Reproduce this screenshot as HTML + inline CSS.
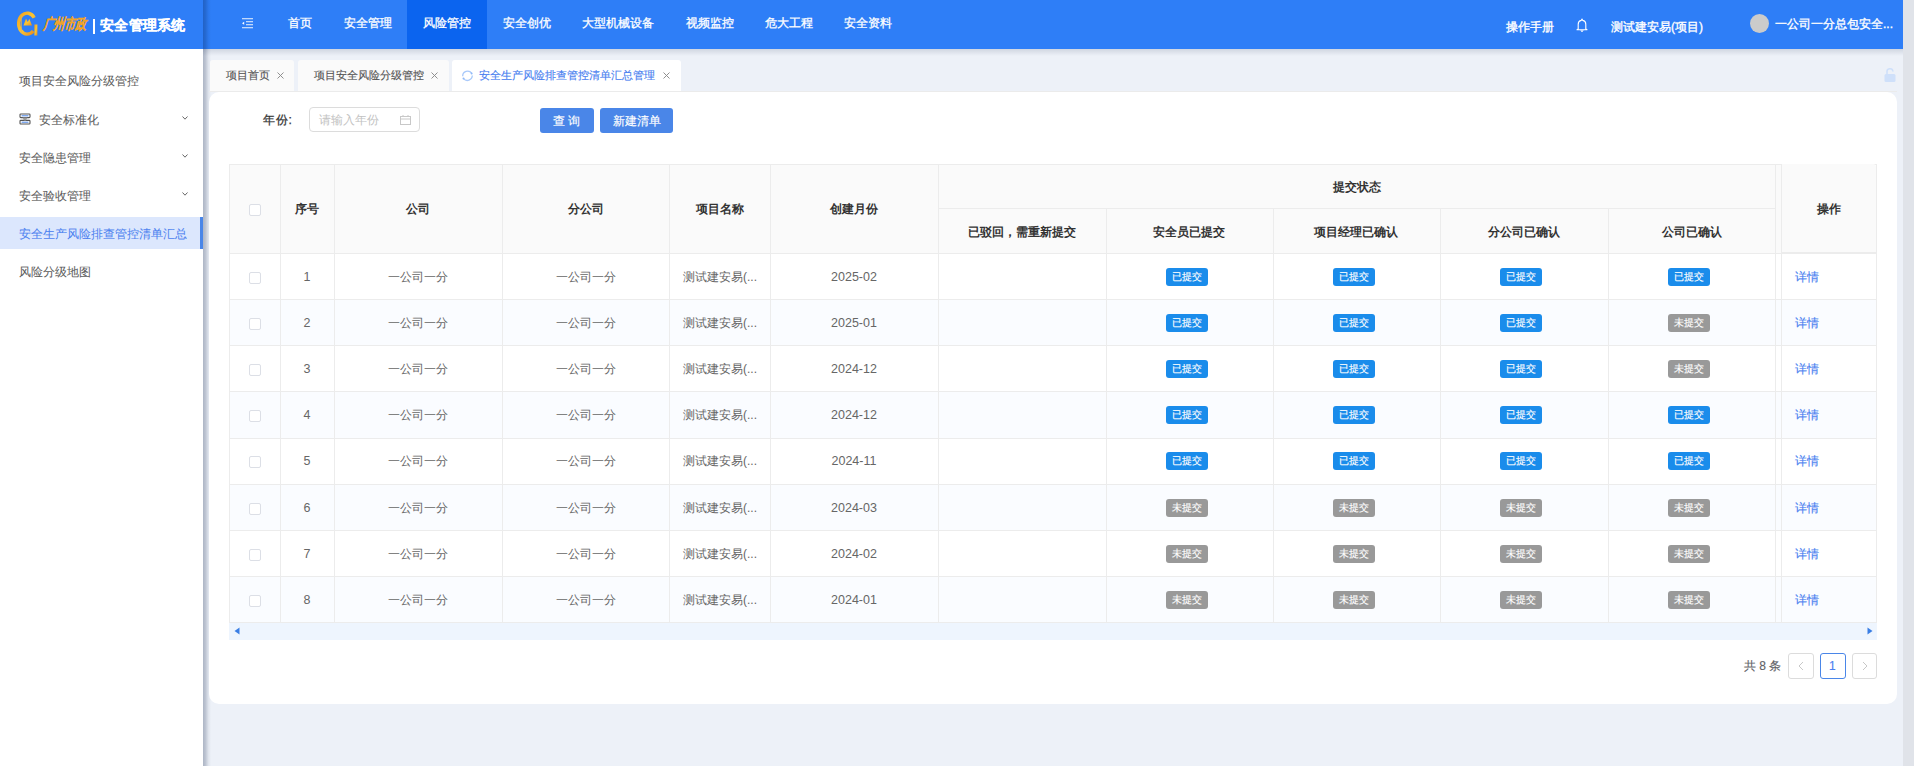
<!DOCTYPE html><html><head><meta charset="utf-8"><style>
*{box-sizing:border-box;margin:0;padding:0}
html,body{width:1914px;height:766px;overflow:hidden}
body{font-family:"Liberation Sans",sans-serif;font-size:12px;background:#edf1f8;position:relative;color:#666}
.abs{position:absolute}
.t{position:absolute;white-space:nowrap;line-height:1;-webkit-text-stroke:0.15px currentColor}
#hdr{left:0;top:0;width:1903px;height:49px;background:#2e7ef7}
#vscroll{left:1903px;top:0;width:11px;height:766px;background:#e0e3e9}
#side{left:0;top:49px;width:203px;height:717px;background:#fff}
#sideshadow{left:203px;top:0;width:8px;height:766px;background:linear-gradient(to right,rgba(0,21,60,.27) 0,rgba(0,21,60,.2) 2.5px,rgba(0,21,60,.06) 5.5px,rgba(0,21,60,0) 8px)}
#hdrshadow{left:203px;top:49px;width:1700px;height:7px;background:linear-gradient(to bottom,rgba(0,21,60,.12),rgba(0,21,60,0))}
.nav{position:absolute;top:0;height:49px;color:#fff;font-size:12px;white-space:nowrap}
.nav .t{-webkit-text-stroke:0.3px #fff}
.nav.act{background:#0b64ef}
.sact{position:absolute;left:0;top:217px;width:203px;height:32px;background:#dce7fd}
.sbar{position:absolute;left:200px;top:217px;width:3px;height:32px;background:#4a86e8}
.chev{position:absolute;width:6px;height:4px}
.tab{position:absolute;top:60px;height:31px;background:#fafafa;border-radius:3px 3px 0 0}
#card{left:209px;top:92px;width:1688px;height:612px;background:#fff;border-radius:10px}
.bx{position:absolute}
.cb{position:absolute;width:12px;height:12px;border:1px solid #dcdfe6;border-radius:2px;background:#fff}
.badge{position:absolute;width:42px;height:18px;border-radius:3px}
.b1{background:#1a8ceb}
.b0{background:#999}
</style></head><body>
<div id="hdr" class="abs"></div>
<svg class="abs" style="left:0;top:0" width="45" height="45" viewBox="0 0 45 45">
<defs><linearGradient id="gold" x1="0" y1="0" x2="1" y2="1"><stop offset="0" stop-color="#f2a21e"/><stop offset="0.5" stop-color="#f9c535"/><stop offset="1" stop-color="#e98d1c"/></linearGradient></defs>
<path d="M34.2 17.8 A8.5 10.5 0 1 0 33.2 31" fill="none" stroke="url(#gold)" stroke-width="3.4"/>
<rect x="34.4" y="24.5" width="3" height="11" fill="url(#gold)"/>
<line x1="21.3" y1="15.5" x2="21.3" y2="32.5" stroke="#d9b060" stroke-width="0.9"/>
<path d="M23.5 25.5 L26 18.5 L27.8 22 L29.3 18.8 L32 25.5 Z" fill="url(#gold)"/>
</svg>
<div class="t" style="left:44px;top:17px;font-size:11px;color:#f2a428;font-style:italic;letter-spacing:-0.4px;-webkit-text-stroke:0.7px #f2a428;transform:scaleY(1.35) skewX(-8deg);transform-origin:0 0">广州市政</div>
<div class="abs" style="left:92.5px;top:19px;width:2px;height:14.5px;background:#fff"></div>
<div class="t" style="left:100px;top:18px;font-size:14px;color:#fff;font-weight:bold;letter-spacing:0.3px;-webkit-text-stroke:0.2px #fff">安全管理系统</div>
<div class="nav" style="left:272px;width:56px"><div class="t" style="left:16px;top:17px">首页</div></div>
<div class="nav" style="left:328px;width:79px"><div class="t" style="left:16px;top:17px">安全管理</div></div>
<div class="nav act" style="left:407px;width:80px"><div class="t" style="left:16px;top:17px">风险管控</div></div>
<div class="nav" style="left:487px;width:79px"><div class="t" style="left:16px;top:17px">安全创优</div></div>
<div class="nav" style="left:566px;width:104px"><div class="t" style="left:16px;top:17px">大型机械设备</div></div>
<div class="nav" style="left:670px;width:79px"><div class="t" style="left:16px;top:17px">视频监控</div></div>
<div class="nav" style="left:749px;width:79px"><div class="t" style="left:16px;top:17px">危大工程</div></div>
<div class="nav" style="left:828px;width:79px"><div class="t" style="left:16px;top:17px">安全资料</div></div>
<svg class="abs" style="left:241px;top:17px" width="13" height="12" viewBox="0 0 13 12">
<rect x="1" y="1" width="11" height="1.3" fill="#c0d8fc"/><rect x="5" y="4" width="7" height="1.3" fill="#c0d8fc"/><rect x="5" y="7" width="7" height="1.3" fill="#c0d8fc"/><rect x="1" y="10" width="11" height="1.3" fill="#c0d8fc"/>
<path d="M1 6.3 L3.2 4.8 L3.2 7.8 Z" fill="#fff"/></svg>
<div class="t" style="left:1506px;top:20.5px;color:#fff;-webkit-text-stroke:0.35px #fff">操作手册</div>
<svg class="abs" style="left:1576px;top:18px" width="12" height="15" viewBox="0 0 12 15">
<path d="M6 1 L6.8 2.4 C8.8 2.8 9.8 4.2 9.8 6.2 L9.8 11 L11 11.8 L1 11.8 L2.2 11 L2.2 6.2 C2.2 4.2 3.2 2.8 5.2 2.4 Z" fill="none" stroke="#fff" stroke-width="1.1" stroke-linejoin="round"/>
<path d="M4.8 12.6 A1.3 1.3 0 0 0 7.2 12.6" fill="#fff" stroke="#fff" stroke-width="1"/></svg>
<div class="t" style="left:1611px;top:20.5px;color:#fff;-webkit-text-stroke:0.35px #fff">测试建安易(项目)</div>
<div class="abs" style="left:1749.5px;top:14px;width:19px;height:19px;border-radius:50%;background:#cbcbcb"></div>
<div class="t" style="left:1775px;top:17.5px;color:#fff;-webkit-text-stroke:0.35px #fff">一公司一分总包安全...</div>
<div id="vscroll" class="abs"></div>
<div id="side" class="abs"></div>
<div class="sact"></div><div class="sbar"></div>
<div class="t" style="left:19px;top:75px;color:#5c5c5c;-webkit-text-stroke:0.05px #5c5c5c">项目安全风险分级管控</div>
<div class="t" style="left:39px;top:114px;color:#5c5c5c;-webkit-text-stroke:0.05px #5c5c5c">安全标准化</div>
<svg class="chev" style="left:182px;top:116px" width="6" height="4" viewBox="0 0 6 4"><path d="M0.5 0.5 L3 3.2 L5.5 0.5" fill="none" stroke="#666" stroke-width="1"/></svg>
<div class="t" style="left:19px;top:152px;color:#5c5c5c;-webkit-text-stroke:0.05px #5c5c5c">安全隐患管理</div>
<svg class="chev" style="left:182px;top:154px" width="6" height="4" viewBox="0 0 6 4"><path d="M0.5 0.5 L3 3.2 L5.5 0.5" fill="none" stroke="#666" stroke-width="1"/></svg>
<div class="t" style="left:19px;top:190px;color:#5c5c5c;-webkit-text-stroke:0.05px #5c5c5c">安全验收管理</div>
<svg class="chev" style="left:182px;top:192px" width="6" height="4" viewBox="0 0 6 4"><path d="M0.5 0.5 L3 3.2 L5.5 0.5" fill="none" stroke="#666" stroke-width="1"/></svg>
<div class="t" style="left:19px;top:228px;color:#4d82f0;-webkit-text-stroke:0.05px #4d82f0">安全生产风险排查管控清单汇总</div>
<div class="t" style="left:19px;top:266px;color:#5c5c5c;-webkit-text-stroke:0.05px #5c5c5c">风险分级地图</div>
<svg class="abs" style="left:19px;top:113px" width="12" height="12" viewBox="0 0 12 12">
<rect x="1" y="1" width="10" height="3.6" rx="0.8" fill="none" stroke="#555" stroke-width="1.1"/>
<rect x="1" y="7.4" width="10" height="3.6" rx="0.8" fill="none" stroke="#555" stroke-width="1.1"/>
<path d="M3.5 4.6 L5 7.4 L7 7.4 L8.5 4.6" fill="#999"/>
<rect x="2.6" y="2.3" width="6.8" height="1" fill="#4a86e8"/><rect x="2.6" y="8.7" width="6.8" height="1" fill="#4a86e8"/></svg>
<div id="sideshadow" class="abs"></div>
<div id="hdrshadow" class="abs"></div>
<div class="tab" style="left:210px;width:84px"></div>
<div class="t" style="left:226px;top:70px;font-size:11px;color:#555">项目首页</div>
<svg class="abs" style="left:277px;top:72px" width="7" height="7" viewBox="0 0 7 7"><path d="M0.5 0.5 L6.5 6.5 M6.5 0.5 L0.5 6.5" stroke="#8a8a8a" stroke-width="0.95"/></svg>
<div class="tab" style="left:298px;width:151px"></div>
<div class="t" style="left:314px;top:70px;font-size:11px;color:#555">项目安全风险分级管控</div>
<svg class="abs" style="left:431px;top:72px" width="7" height="7" viewBox="0 0 7 7"><path d="M0.5 0.5 L6.5 6.5 M6.5 0.5 L0.5 6.5" stroke="#8a8a8a" stroke-width="0.95"/></svg>
<div class="tab" style="left:452px;width:229px;background:#fff"></div>
<svg class="abs" style="left:461px;top:69px" width="13" height="13" viewBox="0 0 13 13">
<path d="M1.7 7.2 A4.9 4.9 0 0 1 10.6 4.2" fill="none" stroke="#a9c9fa" stroke-width="1.3"/>
<path d="M11.3 6.6 A4.9 4.9 0 0 1 2.6 9.6" fill="none" stroke="#a9c9fa" stroke-width="1.3"/>
<circle cx="10.6" cy="4.4" r="1" fill="#8fb8f8"/><circle cx="2.5" cy="9.4" r="1" fill="#8fb8f8"/></svg>
<div class="t" style="left:479px;top:70px;font-size:11px;color:#4a7ff0">安全生产风险排查管控清单汇总管理</div>
<svg class="abs" style="left:663px;top:72px" width="7" height="7" viewBox="0 0 7 7"><path d="M0.5 0.5 L6.5 6.5 M6.5 0.5 L0.5 6.5" stroke="#8a8a8a" stroke-width="0.95"/></svg>
<svg class="abs" style="left:1884px;top:68px" width="12" height="14" viewBox="0 0 12 14">
<path d="M3 6 L3 4 A3 3 0 0 1 9 3.5" fill="none" stroke="#cfe0fa" stroke-width="1.6"/>
<rect x="0.5" y="6" width="11" height="8" rx="1.5" fill="#cfe0fa"/></svg>
<div class="abs" style="left:209px;top:91px;width:1688px;height:1px;background:#ebebeb"></div>
<div id="card" class="abs"></div>
<div class="t" style="left:263px;top:114px;color:#333;-webkit-text-stroke:0.25px #333;letter-spacing:0.8px">年份:</div>
<div class="abs" style="left:309px;top:107px;width:111px;height:25px;border:1px solid #dcdcdc;border-radius:4px;background:#fff"></div>
<div class="t" style="left:319px;top:114px;color:#c2c2c2;-webkit-text-stroke:0">请输入年份</div>
<svg class="abs" style="left:400px;top:115px" width="11" height="10" viewBox="0 0 11 10">
<rect x="0.5" y="1.5" width="10" height="8" fill="none" stroke="#c8c8c8" stroke-width="1"/>
<line x1="0.5" y1="4" x2="10.5" y2="4" stroke="#c8c8c8"/><line x1="3" y1="0" x2="3" y2="2" stroke="#c8c8c8"/><line x1="8" y1="0" x2="8" y2="2" stroke="#c8c8c8"/></svg>
<div class="abs" style="left:540px;top:108px;width:54px;height:25px;background:#4a86e8;border-radius:3px"></div>
<div class="t" style="left:553px;top:115px;color:#fff">查 询</div>
<div class="abs" style="left:600px;top:108px;width:73px;height:25px;background:#4a86e8;border-radius:3px"></div>
<div class="t" style="left:613px;top:115px;color:#fff">新建清单</div>
<div class="abs" style="left:229px;top:164px;width:1552px;height:89px;background:#fafafa;border-radius:3px 0 0 0"></div>
<div class="abs" style="left:229px;top:253px;width:1647px;height:46px;background:#fff"></div>
<div class="abs" style="left:229px;top:299px;width:1647px;height:46px;background:#fafcff"></div>
<div class="abs" style="left:229px;top:345px;width:1647px;height:46px;background:#fff"></div>
<div class="abs" style="left:229px;top:391px;width:1647px;height:47px;background:#fafcff"></div>
<div class="abs" style="left:229px;top:438px;width:1647px;height:46px;background:#fff"></div>
<div class="abs" style="left:229px;top:484px;width:1647px;height:46px;background:#fafcff"></div>
<div class="abs" style="left:229px;top:530px;width:1647px;height:46px;background:#fff"></div>
<div class="abs" style="left:229px;top:576px;width:1647px;height:46px;background:#fafcff"></div>
<div class="abs" style="left:229px;top:164px;width:1647px;height:1px;background:#ececec"></div>
<div class="abs" style="left:938px;top:208px;width:838px;height:1px;background:#ececec"></div>
<div class="abs" style="left:229px;top:253px;width:1647px;height:1px;background:#ececec"></div>
<div class="abs" style="left:229px;top:299px;width:1647px;height:1px;background:#ececec"></div>
<div class="abs" style="left:229px;top:345px;width:1647px;height:1px;background:#ececec"></div>
<div class="abs" style="left:229px;top:391px;width:1647px;height:1px;background:#ececec"></div>
<div class="abs" style="left:229px;top:438px;width:1647px;height:1px;background:#ececec"></div>
<div class="abs" style="left:229px;top:484px;width:1647px;height:1px;background:#ececec"></div>
<div class="abs" style="left:229px;top:530px;width:1647px;height:1px;background:#ececec"></div>
<div class="abs" style="left:229px;top:576px;width:1647px;height:1px;background:#ececec"></div>
<div class="abs" style="left:229px;top:622px;width:1647px;height:1px;background:#ececec"></div>
<div class="abs" style="left:229px;top:164px;width:1px;height:458px;background:#ececec"></div>
<div class="abs" style="left:280px;top:164px;width:1px;height:458px;background:#ececec"></div>
<div class="abs" style="left:334px;top:164px;width:1px;height:458px;background:#ececec"></div>
<div class="abs" style="left:502px;top:164px;width:1px;height:458px;background:#ececec"></div>
<div class="abs" style="left:669px;top:164px;width:1px;height:458px;background:#ececec"></div>
<div class="abs" style="left:770px;top:164px;width:1px;height:458px;background:#ececec"></div>
<div class="abs" style="left:938px;top:164px;width:1px;height:458px;background:#ececec"></div>
<div class="abs" style="left:1106px;top:208px;width:1px;height:414px;background:#ececec"></div>
<div class="abs" style="left:1273px;top:208px;width:1px;height:414px;background:#ececec"></div>
<div class="abs" style="left:1440px;top:208px;width:1px;height:414px;background:#ececec"></div>
<div class="abs" style="left:1608px;top:208px;width:1px;height:414px;background:#ececec"></div>
<div class="abs" style="left:1775px;top:164px;width:1px;height:458px;background:#ececec"></div>
<div class="abs" style="left:1781px;top:164px;width:1px;height:458px;background:#ececec"></div>
<div class="abs" style="left:1782px;top:164px;width:94px;height:88px;background:#fafafa;border-radius:0 3px 0 0"></div>
<div class="abs" style="left:1876px;top:164px;width:1px;height:458px;background:#ececec"></div>
<div class="abs" style="left:1781px;top:252px;width:96px;height:1px;background:#ececec"></div>
<div class="abs" style="left:1781px;top:299px;width:96px;height:1px;background:#ececec"></div>
<div class="abs" style="left:1781px;top:345px;width:96px;height:1px;background:#ececec"></div>
<div class="abs" style="left:1781px;top:391px;width:96px;height:1px;background:#ececec"></div>
<div class="abs" style="left:1781px;top:438px;width:96px;height:1px;background:#ececec"></div>
<div class="abs" style="left:1781px;top:484px;width:96px;height:1px;background:#ececec"></div>
<div class="abs" style="left:1781px;top:530px;width:96px;height:1px;background:#ececec"></div>
<div class="abs" style="left:1781px;top:576px;width:96px;height:1px;background:#ececec"></div>
<div class="abs" style="left:1781px;top:622px;width:96px;height:1px;background:#ececec"></div>
<div class="t" style="left:107px;width:400px;text-align:center;top:203px;color:#333;font-weight:bold;-webkit-text-stroke:0">序号</div>
<div class="t" style="left:218px;width:400px;text-align:center;top:203px;color:#333;font-weight:bold;-webkit-text-stroke:0">公司</div>
<div class="t" style="left:386px;width:400px;text-align:center;top:203px;color:#333;font-weight:bold;-webkit-text-stroke:0">分公司</div>
<div class="t" style="left:520px;width:400px;text-align:center;top:203px;color:#333;font-weight:bold;-webkit-text-stroke:0">项目名称</div>
<div class="t" style="left:654px;width:400px;text-align:center;top:203px;color:#333;font-weight:bold;-webkit-text-stroke:0">创建月份</div>
<div class="cb" style="left:249px;top:204px"></div>
<div class="t" style="left:1157px;width:400px;text-align:center;top:181px;color:#333;font-weight:bold;-webkit-text-stroke:0">提交状态</div>
<div class="t" style="left:822px;width:400px;text-align:center;top:226px;color:#333;font-weight:bold;-webkit-text-stroke:0">已驳回，需重新提交</div>
<div class="t" style="left:989px;width:400px;text-align:center;top:226px;color:#333;font-weight:bold;-webkit-text-stroke:0">安全员已提交</div>
<div class="t" style="left:1156px;width:400px;text-align:center;top:226px;color:#333;font-weight:bold;-webkit-text-stroke:0">项目经理已确认</div>
<div class="t" style="left:1324px;width:400px;text-align:center;top:226px;color:#333;font-weight:bold;-webkit-text-stroke:0">分公司已确认</div>
<div class="t" style="left:1492px;width:400px;text-align:center;top:226px;color:#333;font-weight:bold;-webkit-text-stroke:0">公司已确认</div>
<div class="t" style="left:1629px;width:400px;text-align:center;top:203px;color:#333;font-weight:bold;-webkit-text-stroke:0">操作</div>
<div class="cb" style="left:249px;top:272px"></div>
<div class="t" style="left:107px;width:400px;text-align:center;top:271px;-webkit-text-stroke:0;color:#666;font-size:12.5px">1</div>
<div class="t" style="left:218px;width:400px;text-align:center;top:271px;-webkit-text-stroke:0;color:#666">一公司一分</div>
<div class="t" style="left:386px;width:400px;text-align:center;top:271px;-webkit-text-stroke:0;color:#666">一公司一分</div>
<div class="t" style="left:520px;width:400px;text-align:center;top:271px;-webkit-text-stroke:0;color:#666">测试建安易(...</div>
<div class="t" style="left:654px;width:400px;text-align:center;top:271px;-webkit-text-stroke:0;color:#666;font-size:12.5px">2025-02</div>
<div class="badge b1" style="left:1166px;top:268px"></div>
<div class="t" style="left:987px;width:400px;text-align:center;top:272px;color:#fff;font-size:10px">已提交</div>
<div class="badge b1" style="left:1333px;top:268px"></div>
<div class="t" style="left:1154px;width:400px;text-align:center;top:272px;color:#fff;font-size:10px">已提交</div>
<div class="badge b1" style="left:1500px;top:268px"></div>
<div class="t" style="left:1321px;width:400px;text-align:center;top:272px;color:#fff;font-size:10px">已提交</div>
<div class="badge b1" style="left:1668px;top:268px"></div>
<div class="t" style="left:1489px;width:400px;text-align:center;top:272px;color:#fff;font-size:10px">已提交</div>
<div class="t" style="left:1795px;top:271px;color:#4a7ff0">详情</div>
<div class="cb" style="left:249px;top:318px"></div>
<div class="t" style="left:107px;width:400px;text-align:center;top:317px;-webkit-text-stroke:0;color:#666;font-size:12.5px">2</div>
<div class="t" style="left:218px;width:400px;text-align:center;top:317px;-webkit-text-stroke:0;color:#666">一公司一分</div>
<div class="t" style="left:386px;width:400px;text-align:center;top:317px;-webkit-text-stroke:0;color:#666">一公司一分</div>
<div class="t" style="left:520px;width:400px;text-align:center;top:317px;-webkit-text-stroke:0;color:#666">测试建安易(...</div>
<div class="t" style="left:654px;width:400px;text-align:center;top:317px;-webkit-text-stroke:0;color:#666;font-size:12.5px">2025-01</div>
<div class="badge b1" style="left:1166px;top:314px"></div>
<div class="t" style="left:987px;width:400px;text-align:center;top:318px;color:#fff;font-size:10px">已提交</div>
<div class="badge b1" style="left:1333px;top:314px"></div>
<div class="t" style="left:1154px;width:400px;text-align:center;top:318px;color:#fff;font-size:10px">已提交</div>
<div class="badge b1" style="left:1500px;top:314px"></div>
<div class="t" style="left:1321px;width:400px;text-align:center;top:318px;color:#fff;font-size:10px">已提交</div>
<div class="badge b0" style="left:1668px;top:314px"></div>
<div class="t" style="left:1489px;width:400px;text-align:center;top:318px;color:#fff;font-size:10px">未提交</div>
<div class="t" style="left:1795px;top:317px;color:#4a7ff0">详情</div>
<div class="cb" style="left:249px;top:364px"></div>
<div class="t" style="left:107px;width:400px;text-align:center;top:363px;-webkit-text-stroke:0;color:#666;font-size:12.5px">3</div>
<div class="t" style="left:218px;width:400px;text-align:center;top:363px;-webkit-text-stroke:0;color:#666">一公司一分</div>
<div class="t" style="left:386px;width:400px;text-align:center;top:363px;-webkit-text-stroke:0;color:#666">一公司一分</div>
<div class="t" style="left:520px;width:400px;text-align:center;top:363px;-webkit-text-stroke:0;color:#666">测试建安易(...</div>
<div class="t" style="left:654px;width:400px;text-align:center;top:363px;-webkit-text-stroke:0;color:#666;font-size:12.5px">2024-12</div>
<div class="badge b1" style="left:1166px;top:360px"></div>
<div class="t" style="left:987px;width:400px;text-align:center;top:364px;color:#fff;font-size:10px">已提交</div>
<div class="badge b1" style="left:1333px;top:360px"></div>
<div class="t" style="left:1154px;width:400px;text-align:center;top:364px;color:#fff;font-size:10px">已提交</div>
<div class="badge b1" style="left:1500px;top:360px"></div>
<div class="t" style="left:1321px;width:400px;text-align:center;top:364px;color:#fff;font-size:10px">已提交</div>
<div class="badge b0" style="left:1668px;top:360px"></div>
<div class="t" style="left:1489px;width:400px;text-align:center;top:364px;color:#fff;font-size:10px">未提交</div>
<div class="t" style="left:1795px;top:363px;color:#4a7ff0">详情</div>
<div class="cb" style="left:249px;top:410px"></div>
<div class="t" style="left:107px;width:400px;text-align:center;top:409px;-webkit-text-stroke:0;color:#666;font-size:12.5px">4</div>
<div class="t" style="left:218px;width:400px;text-align:center;top:409px;-webkit-text-stroke:0;color:#666">一公司一分</div>
<div class="t" style="left:386px;width:400px;text-align:center;top:409px;-webkit-text-stroke:0;color:#666">一公司一分</div>
<div class="t" style="left:520px;width:400px;text-align:center;top:409px;-webkit-text-stroke:0;color:#666">测试建安易(...</div>
<div class="t" style="left:654px;width:400px;text-align:center;top:409px;-webkit-text-stroke:0;color:#666;font-size:12.5px">2024-12</div>
<div class="badge b1" style="left:1166px;top:406px"></div>
<div class="t" style="left:987px;width:400px;text-align:center;top:410px;color:#fff;font-size:10px">已提交</div>
<div class="badge b1" style="left:1333px;top:406px"></div>
<div class="t" style="left:1154px;width:400px;text-align:center;top:410px;color:#fff;font-size:10px">已提交</div>
<div class="badge b1" style="left:1500px;top:406px"></div>
<div class="t" style="left:1321px;width:400px;text-align:center;top:410px;color:#fff;font-size:10px">已提交</div>
<div class="badge b1" style="left:1668px;top:406px"></div>
<div class="t" style="left:1489px;width:400px;text-align:center;top:410px;color:#fff;font-size:10px">已提交</div>
<div class="t" style="left:1795px;top:409px;color:#4a7ff0">详情</div>
<div class="cb" style="left:249px;top:456px"></div>
<div class="t" style="left:107px;width:400px;text-align:center;top:455px;-webkit-text-stroke:0;color:#666;font-size:12.5px">5</div>
<div class="t" style="left:218px;width:400px;text-align:center;top:455px;-webkit-text-stroke:0;color:#666">一公司一分</div>
<div class="t" style="left:386px;width:400px;text-align:center;top:455px;-webkit-text-stroke:0;color:#666">一公司一分</div>
<div class="t" style="left:520px;width:400px;text-align:center;top:455px;-webkit-text-stroke:0;color:#666">测试建安易(...</div>
<div class="t" style="left:654px;width:400px;text-align:center;top:455px;-webkit-text-stroke:0;color:#666;font-size:12.5px">2024-11</div>
<div class="badge b1" style="left:1166px;top:452px"></div>
<div class="t" style="left:987px;width:400px;text-align:center;top:456px;color:#fff;font-size:10px">已提交</div>
<div class="badge b1" style="left:1333px;top:452px"></div>
<div class="t" style="left:1154px;width:400px;text-align:center;top:456px;color:#fff;font-size:10px">已提交</div>
<div class="badge b1" style="left:1500px;top:452px"></div>
<div class="t" style="left:1321px;width:400px;text-align:center;top:456px;color:#fff;font-size:10px">已提交</div>
<div class="badge b1" style="left:1668px;top:452px"></div>
<div class="t" style="left:1489px;width:400px;text-align:center;top:456px;color:#fff;font-size:10px">已提交</div>
<div class="t" style="left:1795px;top:455px;color:#4a7ff0">详情</div>
<div class="cb" style="left:249px;top:503px"></div>
<div class="t" style="left:107px;width:400px;text-align:center;top:502px;-webkit-text-stroke:0;color:#666;font-size:12.5px">6</div>
<div class="t" style="left:218px;width:400px;text-align:center;top:502px;-webkit-text-stroke:0;color:#666">一公司一分</div>
<div class="t" style="left:386px;width:400px;text-align:center;top:502px;-webkit-text-stroke:0;color:#666">一公司一分</div>
<div class="t" style="left:520px;width:400px;text-align:center;top:502px;-webkit-text-stroke:0;color:#666">测试建安易(...</div>
<div class="t" style="left:654px;width:400px;text-align:center;top:502px;-webkit-text-stroke:0;color:#666;font-size:12.5px">2024-03</div>
<div class="badge b0" style="left:1166px;top:499px"></div>
<div class="t" style="left:987px;width:400px;text-align:center;top:503px;color:#fff;font-size:10px">未提交</div>
<div class="badge b0" style="left:1333px;top:499px"></div>
<div class="t" style="left:1154px;width:400px;text-align:center;top:503px;color:#fff;font-size:10px">未提交</div>
<div class="badge b0" style="left:1500px;top:499px"></div>
<div class="t" style="left:1321px;width:400px;text-align:center;top:503px;color:#fff;font-size:10px">未提交</div>
<div class="badge b0" style="left:1668px;top:499px"></div>
<div class="t" style="left:1489px;width:400px;text-align:center;top:503px;color:#fff;font-size:10px">未提交</div>
<div class="t" style="left:1795px;top:502px;color:#4a7ff0">详情</div>
<div class="cb" style="left:249px;top:549px"></div>
<div class="t" style="left:107px;width:400px;text-align:center;top:548px;-webkit-text-stroke:0;color:#666;font-size:12.5px">7</div>
<div class="t" style="left:218px;width:400px;text-align:center;top:548px;-webkit-text-stroke:0;color:#666">一公司一分</div>
<div class="t" style="left:386px;width:400px;text-align:center;top:548px;-webkit-text-stroke:0;color:#666">一公司一分</div>
<div class="t" style="left:520px;width:400px;text-align:center;top:548px;-webkit-text-stroke:0;color:#666">测试建安易(...</div>
<div class="t" style="left:654px;width:400px;text-align:center;top:548px;-webkit-text-stroke:0;color:#666;font-size:12.5px">2024-02</div>
<div class="badge b0" style="left:1166px;top:545px"></div>
<div class="t" style="left:987px;width:400px;text-align:center;top:549px;color:#fff;font-size:10px">未提交</div>
<div class="badge b0" style="left:1333px;top:545px"></div>
<div class="t" style="left:1154px;width:400px;text-align:center;top:549px;color:#fff;font-size:10px">未提交</div>
<div class="badge b0" style="left:1500px;top:545px"></div>
<div class="t" style="left:1321px;width:400px;text-align:center;top:549px;color:#fff;font-size:10px">未提交</div>
<div class="badge b0" style="left:1668px;top:545px"></div>
<div class="t" style="left:1489px;width:400px;text-align:center;top:549px;color:#fff;font-size:10px">未提交</div>
<div class="t" style="left:1795px;top:548px;color:#4a7ff0">详情</div>
<div class="cb" style="left:249px;top:595px"></div>
<div class="t" style="left:107px;width:400px;text-align:center;top:594px;-webkit-text-stroke:0;color:#666;font-size:12.5px">8</div>
<div class="t" style="left:218px;width:400px;text-align:center;top:594px;-webkit-text-stroke:0;color:#666">一公司一分</div>
<div class="t" style="left:386px;width:400px;text-align:center;top:594px;-webkit-text-stroke:0;color:#666">一公司一分</div>
<div class="t" style="left:520px;width:400px;text-align:center;top:594px;-webkit-text-stroke:0;color:#666">测试建安易(...</div>
<div class="t" style="left:654px;width:400px;text-align:center;top:594px;-webkit-text-stroke:0;color:#666;font-size:12.5px">2024-01</div>
<div class="badge b0" style="left:1166px;top:591px"></div>
<div class="t" style="left:987px;width:400px;text-align:center;top:595px;color:#fff;font-size:10px">未提交</div>
<div class="badge b0" style="left:1333px;top:591px"></div>
<div class="t" style="left:1154px;width:400px;text-align:center;top:595px;color:#fff;font-size:10px">未提交</div>
<div class="badge b0" style="left:1500px;top:591px"></div>
<div class="t" style="left:1321px;width:400px;text-align:center;top:595px;color:#fff;font-size:10px">未提交</div>
<div class="badge b0" style="left:1668px;top:591px"></div>
<div class="t" style="left:1489px;width:400px;text-align:center;top:595px;color:#fff;font-size:10px">未提交</div>
<div class="t" style="left:1795px;top:594px;color:#4a7ff0">详情</div>
<div class="abs" style="left:229px;top:623px;width:1648px;height:17px;background:#eef5fe"></div>
<svg class="abs" style="left:234px;top:627px" width="6" height="8" viewBox="0 0 6 8"><path d="M0.5 4 L5.5 0.5 L5.5 7.5 Z" fill="#3a7ee4"/></svg>
<svg class="abs" style="left:1867px;top:627px" width="6" height="8" viewBox="0 0 6 8"><path d="M5.5 4 L0.5 0.5 L0.5 7.5 Z" fill="#3a7ee4"/></svg>
<div class="t" style="left:1744px;top:660px;color:#606266">共 8 条</div>
<div class="abs" style="left:1788px;top:653px;width:26px;height:26px;border:1px solid #dcdcdc;border-radius:3px"></div>
<svg class="abs" style="left:1798px;top:661px" width="6" height="10" viewBox="0 0 6 10"><path d="M5 1 L1 5 L5 9" fill="none" stroke="#c8c8c8" stroke-width="1"/></svg>
<div class="abs" style="left:1820px;top:653px;width:26px;height:26px;border:1px solid #4a86e8;border-radius:3px"></div>
<div class="t" style="left:1829px;top:660px;color:#4a7ff0">1</div>
<div class="abs" style="left:1852px;top:653px;width:25px;height:26px;border:1px solid #dcdcdc;border-radius:3px"></div>
<svg class="abs" style="left:1862px;top:661px" width="6" height="10" viewBox="0 0 6 10"><path d="M1 1 L5 5 L1 9" fill="none" stroke="#c8c8c8" stroke-width="1"/></svg>
</body></html>
